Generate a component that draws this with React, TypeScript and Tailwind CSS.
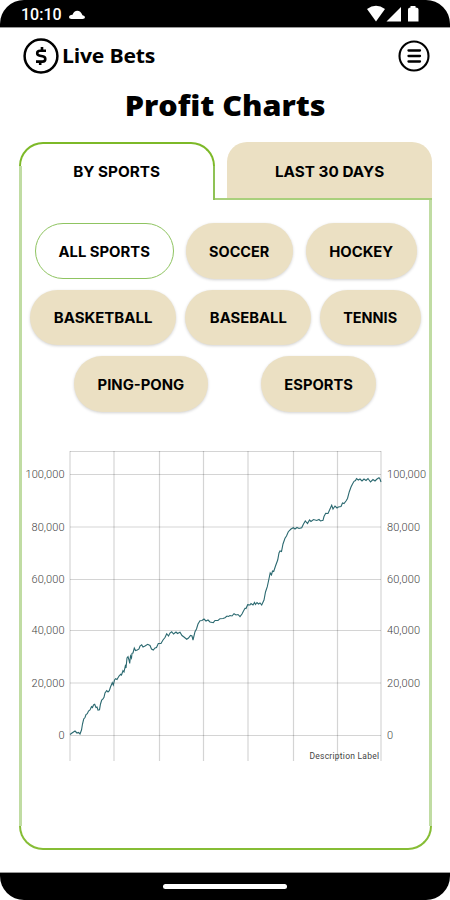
import React from "react";

type Pill = { label: string; box: string; text: string; active?: boolean };

const rows: { layout: string; pills: Pill[] }[] = [
  {
    layout: "gap-[12.5px] pl-[12.5px]",
    pills: [
      { label: "ALL SPORTS", box: "w-[139px]", text: "scale-x-[1.06]", active: true },
      { label: "SOCCER", box: "w-[107px]", text: "scale-x-[1.03]" },
      { label: "HOCKEY", box: "w-[111px]", text: "scale-x-[1.06]" },
    ],
  },
  {
    layout: "gap-[9px] pl-[8px]",
    pills: [
      { label: "BASKETBALL", box: "w-[146px]", text: "scale-x-[1.07]" },
      { label: "BASEBALL", box: "w-[126px]", text: "scale-x-[1.06]" },
      { label: "TENNIS", box: "w-[101px]", text: "scale-x-[1.03]" },
    ],
  },
  {
    layout: "gap-[53px] pl-[52px]",
    pills: [
      { label: "PING-PONG", box: "w-[134px]", text: "scale-x-[1.06]" },
      { label: "ESPORTS", box: "w-[115px]", text: "scale-x-[1.05]" },
    ],
  },
];

const ticks = [
  { label: "100,000", y: 474.5, w: 39 },
  { label: "80,000", y: 527, w: 33 },
  { label: "60,000", y: 579.5, w: 33 },
  { label: "40,000", y: 630.5, w: 33 },
  { label: "20,000", y: 683, w: 33 },
  { label: "0", y: 735.5, w: 6 },
];

const columns = [70, 114, 159.5, 203.5, 248, 293.5, 337.5, 381];

const profit =
  "70,734.5 72,733 75,731 77,733 78.5,732.5 80,734 81.5,730 82.5,724 83.7,719 85,717.5 86,714.5 87.3,713.7 88.5,711 90,710 91.5,706.7 92.5,707.5 93.5,705 94.7,704.3 96,707.5 97,707 98,710 99.5,709.7 100.5,704 101.7,700 103,699 104,697.3 105,693 106.7,690.7 108,692 109.3,690.7 110.5,687 112.3,682.7 113.3,685 114.5,680 115.7,678.7 117,679.5 119,676 120.7,674.3 121.5,675 123,670.7 124,672 125.3,666 126,668 127,658 128,656.7 129,660 129.7,663.5 130.5,656 131.5,658 132,653.3 133,653 134.3,648 135.5,650.5 137.3,650 139,649 140,646 141.7,644.7 143,647 145,646 147.7,644.3 150,645.5 151.5,649 153.3,650 155,648 156.5,647.5 158.3,643.5 161,643.5 163,640 165,637.5 166.7,633.7 168.5,636 170,633 171.7,631.7 173.5,634 176,632 177.5,633.5 180,632.3 182,635.5 184,637 186.7,639.2 188.5,638 190.5,635.5 192,636 193,640 195,631.7 196.5,629 198,624 200,620.7 202,620.5 204,619 206,621 208,620 210,622 213.3,622.7 215,620.5 218,620.5 220,618.7 223,618.5 225,617.7 227,616 228.5,616.5 230,615.5 232,616 234,613.7 236,615 238,614.5 240,616.7 242,614 243.5,611 245,608.3 246,608.5 247.7,604.7 250,605 251,603.5 253,605 254.5,602.5 255.5,604.5 257,602.5 258.5,604 260,603 261.7,605 264,600 265.5,592 267.3,586.7 268.5,581 270.2,573 271.5,575 272.5,571 273.7,571.5 275.5,566 277.7,560 279,553 280,551 281.5,551.5 283,544 285,538.3 286.5,536 288.3,531.7 291,529 293.3,527.7 295,529 297,527.5 299,528.5 301.7,527.7 303.5,524 305.3,521 307.5,523.5 309.5,520 311,521.5 313.5,519.5 316.7,520.5 319,519.5 320.5,521 323,520.3 324,516.5 325.7,513.3 328,513.5 330,509 331.7,505.3 333,509 335,506 337,508 338.3,507 341,506.5 342.5,503 344,503.5 346,501 347.5,498.5 349.3,491.7 351,487 352.5,484 354,481.3 355.5,480.5 356.5,478.5 358.3,480 360,479 362,481 364,479 366,480.5 368,478.5 370.5,482 373,479.5 375,481 377,479 379,477.7 380,479 381,482";

const StatusBar = () => {
  return (
    <div className="flex h-[28px] items-start justify-between rounded-t-[24px] border-b border-[#999] bg-black pl-[21px] pr-[31px]">
      <div className="flex items-center gap-[7px] pt-[5px]">
        <span className="font-[Roboto] text-[16px] font-medium leading-[20px] text-white">
          10:10
        </span>
        <svg width="17" height="10" viewBox="0 0 17 10" fill="white">
          <path d="M2.5 9H13.5Q16 9 16 7.2Q16 5.8 13.5 5.2Q11.5 .8 8.3 .8Q5 .8 3.5 4.8Q0 5.2 0 7.2Q0 9 2.5 9Z" />
        </svg>
      </div>
      <svg className="mt-[5px]" width="52" height="18" viewBox="0 0 52 18" fill="white">
        <path d="M0 4Q9-2.5 18 4L9 16.5Z" />
        <path d="M19.5 16.500L34 2V16.5Z" />
        <path d="M43.5 2.5V1h5v1.5q3 0 3 2V16.5H41V4.5q0-2 2.5-2Z" />
      </svg>
    </div>
  );
};

const Header = () => {
  return (
    <div className="flex h-[56px] items-center justify-between pl-[23px] pr-[20px]">
      <div className="flex items-center gap-[3px]">
        <svg width="36" height="36" viewBox="0 0 36 36" fill="none" stroke="black">
          <circle cx="18" cy="18" r="16.4" strokeWidth="2.5" />
          <path
            d="M23 12.8H17.3Q14.2 12.8 14.2 15.2Q14.2 17.3 17 17.7L19.5 18.2Q22.3 18.7 22.3 20.9Q22.3 23.6 19.3 23.6H13M19 9V12.8M17.2 23.5V27"
            strokeWidth="2.6"
          />
        </svg>
        <span className="origin-left scale-x-[1.06] text-[20px] font-bold leading-[28px] tracking-[-0.2px]">
          Live Bets
        </span>
      </div>
      <svg width="32" height="32" viewBox="0 0 32 32" fill="none" stroke="black">
        <circle cx="16" cy="16" r="14.5" strokeWidth="2.1" />
        <path d="M10.5 10.5h11.5M10.5 16h11.5M10.5 21.5h11.5" strokeWidth="2.3" strokeLinecap="round" />
      </svg>
    </div>
  );
};

const Tabs = () => {
  return (
    <div className="flex h-[58px] font-[Inter] text-[15px] font-bold">
      <div className="grid w-[196px]">
        <div className="col-start-1 row-start-1 flex flex-col">
          <div className="h-[24px] rounded-t-[24px] border-x-2 border-t-2 border-[#7db928]" />
          <div className="grow border-l-[3px] border-r-2 border-l-[#c0dca3] border-r-[#8fc255]" />
        </div>
        <div className="col-start-1 row-start-1 flex items-center justify-center pt-[2px]">
          <span className="scale-x-[1.02]">BY SPORTS</span>
        </div>
      </div>
      <div className="flex grow border-b-2 border-[#a9d07c] pl-[12px]">
        <div className="flex grow items-center justify-center rounded-t-[20px] bg-[#ebe0c3] pt-[4px]">
          <span className="scale-x-[1.02]">LAST 30 DAYS</span>
        </div>
      </div>
    </div>
  );
};

const Filters = () => {
  return (
    <div className="flex flex-col gap-[11px] pt-[23px] font-[Inter]">
      {rows.map((row, i) => (
        <div key={i} className={`flex ${row.layout}`}>
          {row.pills.map((pill) => (
            <button
              key={pill.label}
              className={`flex h-[55.5px] shrink-0 items-center justify-center whitespace-nowrap rounded-full pt-[1px] text-[14px] font-bold ${pill.box} ${
                pill.active
                  ? "border-[1.5px] border-[#8fc461] bg-white"
                  : "bg-[#ebe0c3] shadow-[0_1px_3px_rgba(0,0,0,0.18)]"
              }`}
            >
              <span className={pill.text}>{pill.label}</span>
            </button>
          ))}
        </div>
      ))}
    </div>
  );
};

const Chart = () => {
  return (
    <svg className="mt-[28.5px]" width="407" height="326" viewBox="22 440 407 326" fontFamily="Roboto" fill="#444">
      <g stroke="#000" strokeOpacity="0.17" strokeWidth="1.2">
        <path d="M70 451.5H381" />
        {ticks.map((t) => (
          <path key={t.label} d={`M70 ${t.y}H381`} />
        ))}
        {columns.map((x) => (
          <path key={x} d={`M${x} 451V761`} />
        ))}
      </g>
      {ticks.map((t) => (
        <g key={t.label} fontSize="11" fontWeight="300">
          <text x="64.5" y={t.y + 3.5} textAnchor="end" textLength={t.w}>
            {t.label}
          </text>
          <text x="387" y={t.y + 3.5} textLength={t.w}>
            {t.label}
          </text>
        </g>
      ))}
      <polyline points={profit} fill="none" stroke="#2b6970" strokeWidth="1.1" />
      <text x="309.5" y="758.5" fontSize="8.5" textLength="69.5">
        Description Label
      </text>
    </svg>
  );
};

const App = () => {
  return (
    <div className="flex h-[900px] w-[450px] flex-col bg-white font-['Open_Sans',sans-serif] text-black">
      <StatusBar />
      <Header />
      <h1 className="flex h-[58px] justify-center text-[28px] font-extrabold leading-[43px]">
        <span className="scale-x-[1.09]">Profit Charts</span>
      </h1>
      <div className="ml-[19px] flex h-[708px] w-[413px] flex-col">
        <Tabs />
        <div className="h-[626px] border-x-[3px] border-[#c0dca3]">
          <Filters />
          <Chart />
        </div>
        <div className="h-[24px] shrink-0 rounded-b-[24px] border-x-2 border-b-2 border-[#86bd35]" />
      </div>
      <div className="mt-auto flex h-[28px] shrink-0 items-center justify-center rounded-b-[24px] border-t border-[#999] bg-black">
        <div className="h-[5px] w-[124px] rounded-full bg-white" />
      </div>
    </div>
  );
};

export default App;
